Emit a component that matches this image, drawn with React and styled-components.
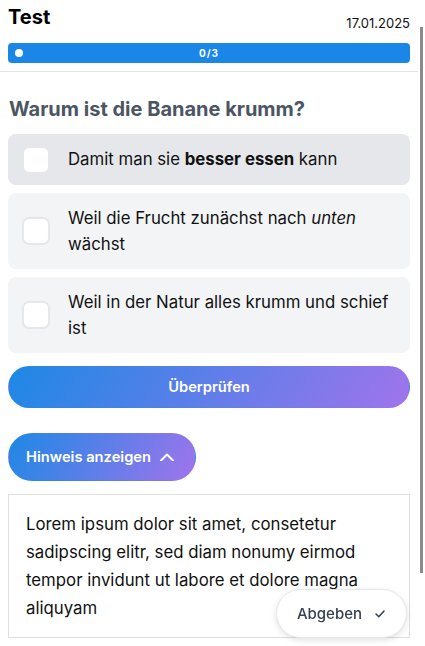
import React, { useLayoutEffect, useRef } from 'react';
import styled, { createGlobalStyle } from 'styled-components';

const GlobalStyle = createGlobalStyle`
  html, body, #root {
    height: 100%;
    margin: 0;
  }
  body {
    font-family: Inter, 'Noto Sans', sans-serif;
    color: #111;
    background: #fff;
  }
  * {
    box-sizing: border-box;
  }
`;

const Page = styled.div`
  display: flex;
  height: 100vh;
`;

const Scroller = styled.div`
  flex: 1;
  min-width: 0;
  overflow-y: auto;
  scrollbar-width: none;
`;

// scroll indicator next to the scrolled content
const Rail = styled.div`
  flex: 0 0 7px;
  padding: 27px 2px 0;
`;

const Thumb = styled.div`
  height: 546px;
  background: #8b8b8b;
`;

const Header = styled.header`
  position: sticky;
  top: 0;
  z-index: 2;
  background: #fff;
  padding: 5px 8px 8px;
  border-bottom: 1px solid #e5e5e5;
`;

const TitleRow = styled.div`
  display: flex;
  justify-content: space-between;
  align-items: flex-end;
`;

const Title = styled.h1`
  margin: 0;
  font-size: 20px;
  line-height: 24px;
  font-weight: 700;
  color: #000;
`;

const DateLabel = styled.span`
  font-size: 13px;
  line-height: 16px;
  margin-bottom: -2px;
  color: #111;
`;

const Progress = styled.div`
  margin-top: 14px;
  height: 20px;
  border-radius: 4px;
  background: #1a87e8;
  padding: 0 7px;
  display: grid;
  grid-template-columns: 1fr auto 1fr;
  align-items: center;
  color: #fff;
  font-size: 10px;
  font-weight: 700;
  letter-spacing: 1px;
`;

const Dot = styled.span`
  width: 8px;
  height: 8px;
  border-radius: 50%;
  background: #fff;
`;

const Main = styled.main`
  padding: 55px 8px 94px;
`;

const Question = styled.h2`
  margin: 0 0 11px;
  padding-left: 1px;
  font-size: 20px;
  line-height: 28px;
  font-weight: 700;
  color: #4b5563;
`;

const Options = styled.div`
  display: flex;
  flex-direction: column;
  gap: 8px;
`;

const Option = styled.label`
  display: flex;
  align-items: center;
  gap: 18px;
  padding: 11.5px 14px;
  border-radius: 8px;
  background: ${p => (p.$hover ? '#e5e7eb' : '#f3f4f6')};
  font-size: 16.8px;
  line-height: 26.5px;
  color: #111;
  cursor: pointer;
`;

const Box = styled.span`
  flex-shrink: 0;
  width: 28px;
  height: 28px;
  border: 2px solid #e5e7eb;
  border-radius: 7px;
  background: #fff;
`;

const GradientButton = styled.button`
  border: 1px solid transparent;
  border-radius: 999px;
  background: linear-gradient(120deg, #1e88e5, #a074ec);
  color: #fff;
  font-family: inherit;
  font-size: 14.7px;
  font-weight: 600;
  cursor: pointer;
`;

const CheckButton = styled(GradientButton)`
  display: block;
  width: 100%;
  height: 42px;
  margin-top: 13px;
`;

const HintToggle = styled(GradientButton)`
  display: flex;
  align-items: center;
  gap: 9px;
  width: fit-content;
  height: 48px;
  margin-top: 25px;
  padding: 0 21px 0 17px;
`;

const HintBox = styled.div`
  margin-top: 13px;
  border: 1px solid #e0e0e0;
  padding: 15px 17px 15px;
  font-size: 16.8px;
  line-height: 28px;
  color: #111;
`;

const SubmitButton = styled.button`
  position: fixed;
  right: 18px;
  bottom: 8px;
  z-index: 3;
  display: flex;
  align-items: center;
  gap: 13px;
  height: 49px;
  padding: 0 21px 0 20px;
  border: 1px solid #e5e7eb;
  border-radius: 999px;
  background: #fff;
  box-shadow: 0 2px 6px rgba(0, 0, 0, 0.12);
  font-family: inherit;
  font-size: 15px;
  font-weight: 500;
  color: #374151;
  cursor: pointer;
`;

const options = [
  { id: 1, text: <>Damit man sie <b>besser essen</b> kann</> },
  { id: 2, text: <>Weil die Frucht zunächst nach <i>unten</i> wächst</> },
  { id: 3, text: <>Weil in der Natur alles krumm und schief ist</> }
];

const ChevronUp = () => (
  <svg width="14" height="8" viewBox="0 0 14 8" fill="none">
    <polyline points="1,7.5 7,1.5 13,7.5" stroke="#fff" strokeWidth="2" strokeLinecap="round" strokeLinejoin="round" />
  </svg>
);

const Check = () => (
  <svg width="10" height="8" viewBox="0 0 10 8" fill="none">
    <polyline points="1,4 3.8,6.8 9,1" stroke="#374151" strokeWidth="1.5" strokeLinecap="round" strokeLinejoin="round" />
  </svg>
);

export default function App() {
  const scroller = useRef(null);

  useLayoutEffect(() => {
    if (scroller.current) scroller.current.scrollTop = 32;
  }, []);

  return (
    <>
      <GlobalStyle />
      <Page>
        <Scroller ref={scroller}>
          <Header>
            <TitleRow>
              <Title>Test</Title>
              <DateLabel>17.01.2025</DateLabel>
            </TitleRow>
            <Progress>
              <Dot />
              <span>0/3</span>
              <span />
            </Progress>
          </Header>
          <Main>
            <Question>Warum ist die Banane krumm?</Question>
            <Options>
              {options.map((o, i) => (
                <Option key={o.id} $hover={i === 0}>
                  <Box />
                  <span>{o.text}</span>
                </Option>
              ))}
            </Options>
            <CheckButton>Überprüfen</CheckButton>
            <HintToggle>
              Hinweis anzeigen
              <ChevronUp />
            </HintToggle>
            <HintBox>
              Lorem ipsum dolor sit amet, consetetur sadipscing elitr, sed diam nonumy eirmod tempor invidunt ut labore et dolore magna aliquyam
            </HintBox>
          </Main>
        </Scroller>
        <Rail>
          <Thumb />
        </Rail>
      </Page>
      <SubmitButton>
        Abgeben
        <Check />
      </SubmitButton>
    </>
  );
}
